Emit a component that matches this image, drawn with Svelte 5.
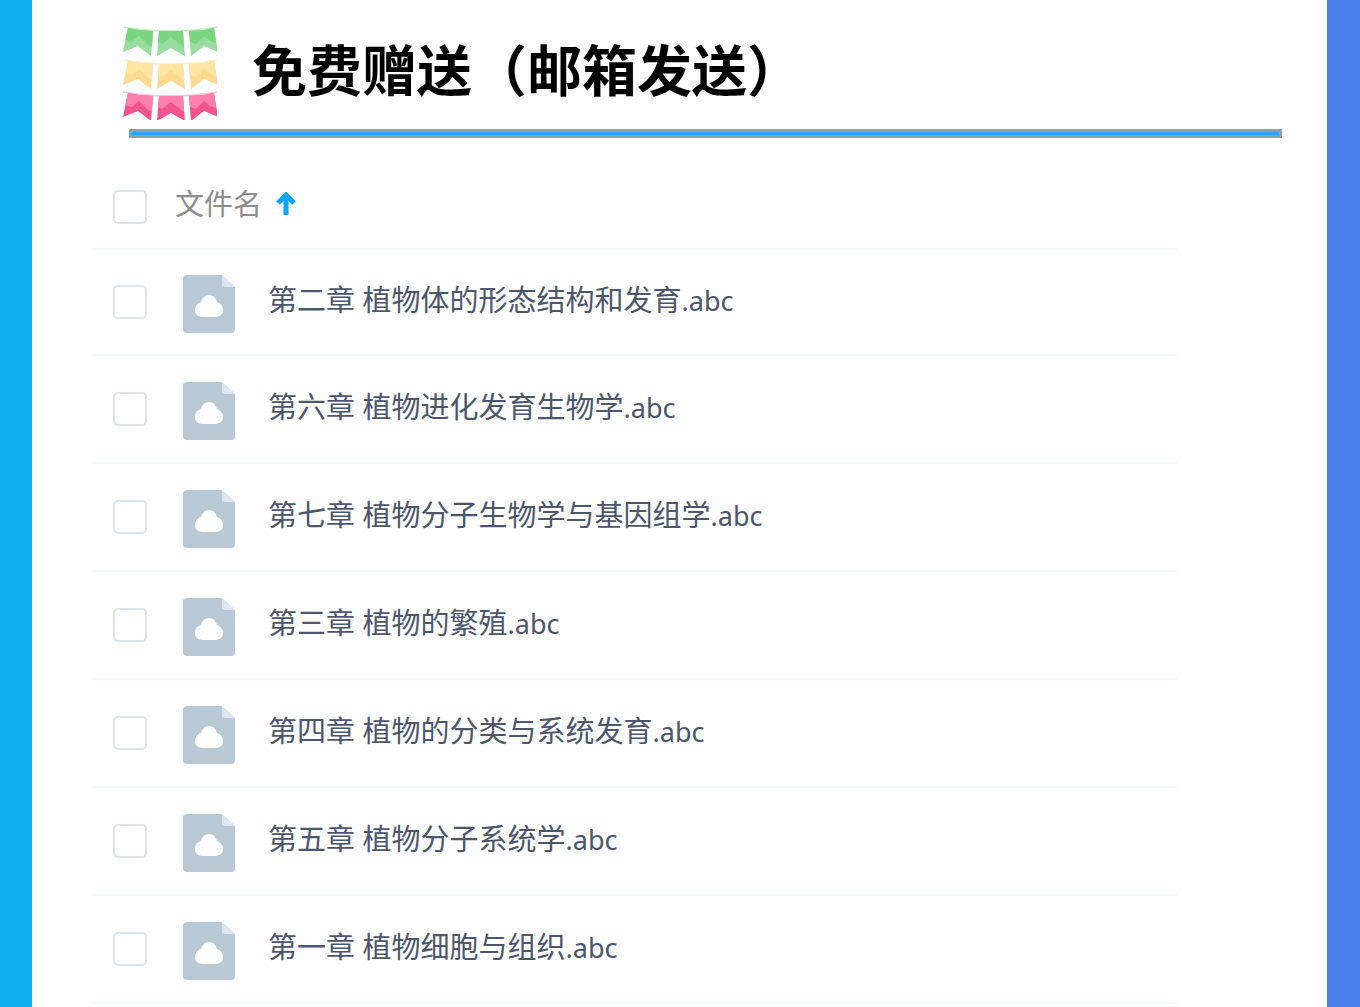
<script>
	const files = [
		{ id: 2, name: '第二章 植物体的形态结构和发育', ext: '.abc' },
		{ id: 6, name: '第六章 植物进化发育生物学', ext: '.abc' },
		{ id: 7, name: '第七章 植物分子生物学与基因组学', ext: '.abc' },
		{ id: 3, name: '第三章 植物的繁殖', ext: '.abc' },
		{ id: 4, name: '第四章 植物的分类与系统发育', ext: '.abc' },
		{ id: 5, name: '第五章 植物分子系统学', ext: '.abc' },
		{ id: 1, name: '第一章 植物细胞与组织', ext: '.abc' }
	];

	const garlands = [
		{ y: 0, top: '#7bd580', bottom: '#98dd9f', line: '#c4edc8' },
		{ y: 33, top: '#ffe5a2', bottom: '#ffdb91', line: '#ffefc8' },
		{ y: 65, top: '#ff80ad', bottom: '#f2548f', line: '#ffc0d8' }
	];

	let selected = $state([]);

	const toggleAll = (e) => {
		selected = e.currentTarget.checked ? files.map((f) => f.id) : [];
	};
</script>

<div class="page">
	<main>
		<header>
			<svg class="flags" viewBox="0 0 94 94" aria-hidden="true">
				{#each garlands as g}
					<g transform="translate(0 {g.y})">
						<path d="M0 1Q47 9 94 1" fill="none" stroke={g.line} stroke-width="1.5" />
						<path d="M5 2Q17 5 30 5L28 30L15 20L0 26Z" fill={g.bottom} />
						<path d="M5 2Q17 5 30 5L29 21L24 18L16 10L9 16L2 14Z" fill={g.top} />
						<path d="M36 5H60L62 30L48 22L34 30Z" fill={g.bottom} />
						<path d="M36 5H60L61 21L57 18L48 11L39 18L35 16Z" fill={g.top} />
						<path d="M66 5Q79 5 91 2L95 26L81 20L68 30Z" fill={g.bottom} />
						<path d="M66 5Q79 5 91 2L93 17L87 15L81 10L73 18L67 16Z" fill={g.top} />
					</g>
				{/each}
			</svg>
			<h1>免费赠送（邮箱发送）</h1>
		</header>
		<div class="rule"></div>

		<table>
			<colgroup>
				<col class="col-check" />
				<col class="col-icon" />
				<col />
			</colgroup>
			<thead>
				<tr>
					<th class="check">
						<input
							type="checkbox"
							aria-label="全选"
							checked={selected.length === files.length}
							onchange={toggleAll}
						/>
					</th>
					<th colspan="2">
						<button type="button">
							文件名
							<svg class="arrow" viewBox="0 0 20 24" aria-hidden="true">
								<path d="M10 23V4M2 11L10 3L18 11" />
							</svg>
						</button>
					</th>
				</tr>
			</thead>
			<tbody>
				{#each files as file (file.id)}
					<tr>
						<td class="check">
							<input type="checkbox" id="file-{file.id}" value={file.id} bind:group={selected} />
						</td>
						<td class="icon">
							<svg viewBox="0 0 52 58" aria-hidden="true">
								<path d="M4 0H39L52 12V54Q52 58 48 58H4Q0 58 0 54V4Q0 0 4 0Z" fill="#b9c8d5" />
								<path d="M39 0L52 12H42Q39 12 39 9Z" fill="#dce6ee" />
								<path
									d="M19 42Q12 41 12 35Q12 29 18 27Q20 20 26 20Q32 20 34 27Q40 29 40 35Q40 41 33 42Z"
									fill="#fff"
								/>
							</svg>
						</td>
						<td class="name">
							<label for="file-{file.id}">{file.name}<span class="ext">{file.ext}</span></label>
						</td>
					</tr>
				{/each}
			</tbody>
		</table>
	</main>
</div>

<style>
	:global(body) {
		margin: 0;
		font-family: 'Noto Sans', 'Noto Sans CJK SC', sans-serif;
	}

	.page {
		box-sizing: border-box;
		min-height: 100vh;
		border-left: 32px solid #0daef0;
		border-right: 33px solid #487eea;
		background: #fefefe;
	}

	header {
		display: flex;
		align-items: flex-start;
		gap: 35px;
		padding: 26px 45px 9px 91px;
	}

	.flags {
		width: 94px;
		height: 94px;
		flex: none;
	}

	h1 {
		margin: 0;
		font-family: 'Noto Sans CJK SC', sans-serif;
		font-size: 55px;
		line-height: 82px;
		font-weight: 700;
		color: #000;
		white-space: nowrap;
	}

	.rule {
		height: 3px;
		margin: 0 45px 0 97px;
		border: 3px solid #87a3a4;
		background: #359ff2;
	}

	table {
		width: calc(100% - 209px);
		margin: 22px 150px 0 59px;
		border-collapse: separate;
		border-spacing: 0;
		table-layout: fixed;
	}

	.col-check {
		width: 84px;
	}

	.col-icon {
		width: 93px;
	}

	th,
	td {
		box-sizing: border-box;
		height: 108px;
		padding: 0;
		border-bottom: 2px solid #f5f8fc;
		text-align: left;
		vertical-align: middle;
	}

	th {
		height: 90px;
		font-weight: 400;
	}

	tbody tr:first-child td {
		height: 106px;
	}

	.check {
		padding-left: 22px;
	}

	th.check {
		padding-top: 6px;
	}

	.icon {
		padding: 4px 0 0 8px;
	}

	input {
		appearance: none;
		display: block;
		box-sizing: border-box;
		width: 34px;
		height: 34px;
		margin: 0;
		border: 2px solid #dde4ec;
		border-radius: 5px;
		background: #fff;
	}

	input:checked {
		border-color: #06a7ff;
		background: #06a7ff;
	}

	button {
		display: flex;
		align-items: center;
		gap: 14px;
		padding: 0;
		border: 0;
		background: none;
		font: inherit;
		font-size: 29px;
		line-height: 40px;
		color: #8e8e8e;
		cursor: pointer;
	}

	.arrow {
		width: 20px;
		height: 24px;
		fill: none;
		stroke: #06a7ff;
		stroke-width: 5;
	}

	.icon svg {
		display: block;
		width: 52px;
		height: 58px;
	}

	.name {
		padding-bottom: 4px;
		font-size: 29px;
		line-height: 40px;
		color: #4c566c;
		white-space: nowrap;
	}

	.ext {
		font-size: 27px;
	}
</style>
